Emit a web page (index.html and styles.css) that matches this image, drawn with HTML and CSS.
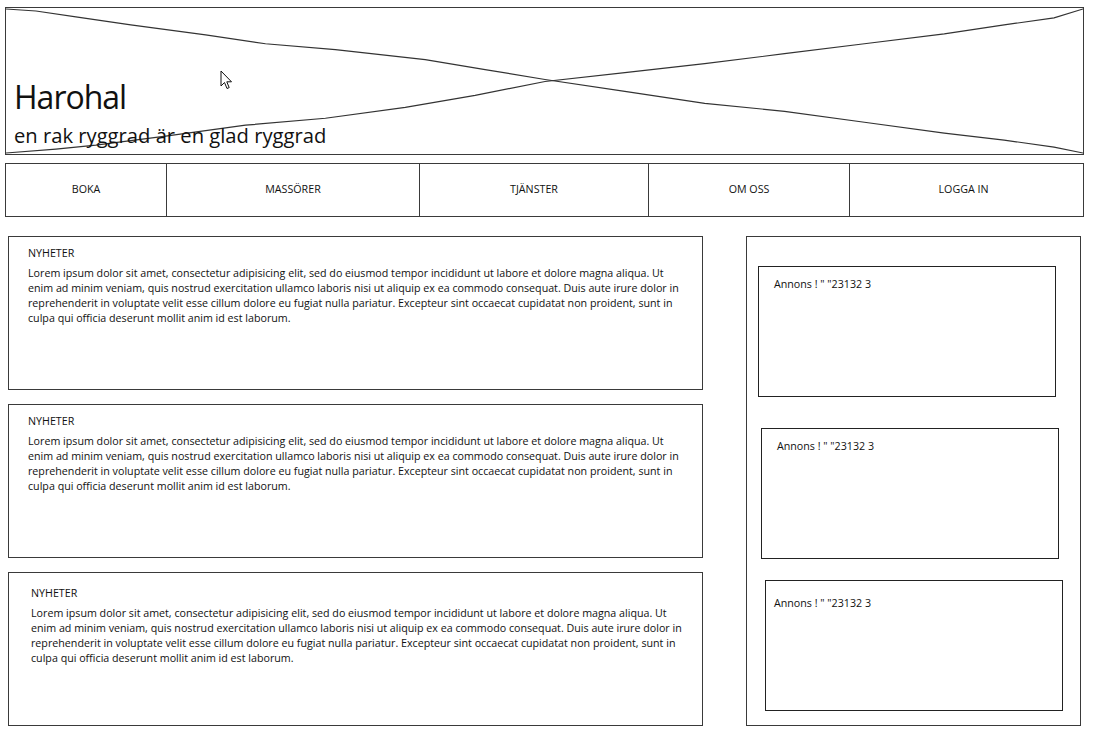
FILE: index.html
```html
<!DOCTYPE html>
<html lang="sv">
<head>
<meta charset="utf-8">
<title>Harohal</title>
<link rel="stylesheet" href="styles.css">
</head>
<body>
<div class="page">
  <header class="header">
    <svg class="placeholder" viewBox="0 0 1079 147" preserveAspectRatio="none" aria-hidden="true">
      <polyline points="0,1 30,3 70,9 125,17 200,27 260,36 330,42 420,52 480,62 540,72 620,84 700,96 780,104 860,115 940,126 1000,133 1050,140 1079,146" fill="none" stroke="#333" stroke-width="1.2"/>
      <polyline points="0,146 50,142 90,138 160,129 240,118 320,111 400,100 470,88 540,74 620,65 700,56 780,46 860,36 940,26 1000,17 1050,10 1079,1" fill="none" stroke="#333" stroke-width="1.2"/>
    </svg>
    <svg class="cursor" width="14" height="20" viewBox="0 0 14 20" aria-hidden="true">
      <path d="M1 1 L1 16 L4.5 12.5 L7 18.5 L9.2 17.6 L6.8 11.8 L11.5 11.8 Z" fill="#fff" stroke="#111" stroke-width="1" stroke-linejoin="round"/>
    </svg>
    <div class="brand">
      <h1 class="title">Harohal</h1>
      <p class="tagline">en rak ryggrad är en glad ryggrad</p>
    </div>
  </header>

  <nav class="nav">
    <a class="nav-item nav-boka">BOKA</a>
    <a class="nav-item nav-masso">MASSÖRER</a>
    <a class="nav-item nav-tjanst">TJÄNSTER</a>
    <a class="nav-item nav-om">OM OSS</a>
    <a class="nav-item nav-logga">LOGGA IN</a>
  </nav>

  <main class="main">
    <section class="news">
      <article class="news-item">
        <h2 class="news-title">NYHETER</h2>
        <p class="news-text">Lorem ipsum dolor sit amet, consectetur adipisicing elit, sed do eiusmod tempor incididunt ut labore et dolore magna aliqua. Ut enim ad minim veniam, quis nostrud exercitation ullamco laboris nisi ut aliquip ex ea commodo consequat. Duis aute irure dolor in reprehenderit in voluptate velit esse cillum dolore eu fugiat nulla pariatur. Excepteur sint occaecat cupidatat non proident, sunt in culpa qui officia deserunt mollit anim id est laborum.</p>
      </article>
      <article class="news-item">
        <h2 class="news-title">NYHETER</h2>
        <p class="news-text">Lorem ipsum dolor sit amet, consectetur adipisicing elit, sed do eiusmod tempor incididunt ut labore et dolore magna aliqua. Ut enim ad minim veniam, quis nostrud exercitation ullamco laboris nisi ut aliquip ex ea commodo consequat. Duis aute irure dolor in reprehenderit in voluptate velit esse cillum dolore eu fugiat nulla pariatur. Excepteur sint occaecat cupidatat non proident, sunt in culpa qui officia deserunt mollit anim id est laborum.</p>
      </article>
      <article class="news-item news-item-last">
        <h2 class="news-title">NYHETER</h2>
        <p class="news-text">Lorem ipsum dolor sit amet, consectetur adipisicing elit, sed do eiusmod tempor incididunt ut labore et dolore magna aliqua. Ut enim ad minim veniam, quis nostrud exercitation ullamco laboris nisi ut aliquip ex ea commodo consequat. Duis aute irure dolor in reprehenderit in voluptate velit esse cillum dolore eu fugiat nulla pariatur. Excepteur sint occaecat cupidatat non proident, sunt in culpa qui officia deserunt mollit anim id est laborum.</p>
      </article>
    </section>

    <aside class="sidebar">
      <div class="ad ad-1">Annons ! " "23132 3</div>
      <div class="ad ad-2">Annons ! " "23132 3</div>
      <div class="ad ad-3">Annons ! " "23132 3</div>
    </aside>
  </main>
</div>
</body>
</html>
```

FILE: styles.css
```css
* { box-sizing: border-box; }

html, body {
  margin: 0;
  padding: 0;
  background: #fff;
}

body {
  font-family: "Open Sans", "Liberation Sans", sans-serif;
  color: #111;
}

.page {
  width: 1084px;
  padding: 7px 0 0 5px;
}

/* header */
.header {
  position: relative;
  height: 148px;
  border: 1px solid #3a3a3a;
  display: flex;
  align-items: flex-end;
}

.placeholder {
  position: absolute;
  left: 0;
  top: 0;
  width: 100%;
  height: 100%;
}

.cursor {
  position: absolute;
  left: 214px;
  top: 62px;
}

.brand {
  position: relative;
  padding: 0 0 6px 8px;
}

.title {
  margin: 0 0 8px;
  font-weight: 400;
  font-size: 32px;
  line-height: 34px;
  letter-spacing: -1px;
}

.tagline {
  margin: 0;
  font-size: 20.2px;
  line-height: 26px;
  font-weight: 400;
}

/* nav */
.nav {
  margin-top: 8px;
  height: 54px;
  border: 1px solid #3a3a3a;
  display: flex;
}

.nav-item {
  display: flex;
  align-items: center;
  justify-content: center;
  font-size: 10.7px;
  color: #111;
  border-right: 1px solid #3a3a3a;
  padding-bottom: 2px;
}

.nav-boka { width: 161px; }
.nav-masso { width: 253px; }
.nav-tjanst { width: 229px; }
.nav-om { width: 201px; }
.nav-logga { flex: 1; border-right: none; padding-right: 6px; }

/* main */
.main {
  margin-top: 19px;
  display: flex;
  align-items: flex-start;
}

.news {
  width: 695px;
  margin-left: 3px;
  display: flex;
  flex-direction: column;
  gap: 14px;
}

.news-item {
  height: 154px;
  border: 1px solid #3a3a3a;
  padding: 9px 20px 0 19px;
}

.news-item-last {
  padding: 13px 20px 0 22px;
}

.news-title {
  margin: 0;
  font-size: 10.7px;
  line-height: 15px;
  font-weight: 400;
}

.news-text {
  margin: 5px 0 0;
  font-size: 10.7px;
  line-height: 15px;
  max-width: 656px;
}

.sidebar {
  width: 335px;
  height: 490px;
  margin-left: 43px;
  border: 1px solid #3a3a3a;
  padding-top: 29px;
  display: flex;
  flex-direction: column;
}

.ad {
  width: 298px;
  height: 131px;
  border: 1px solid #222;
  padding: 10px 0 0 15px;
  font-size: 10.7px;
  line-height: 15px;
}

.ad-1 { margin-left: 11px; }
.ad-2 { margin-left: 14px; margin-top: 31px; }
.ad-3 { margin-left: 18px; margin-top: 21px; padding: 15px 0 0 8px; }
```
